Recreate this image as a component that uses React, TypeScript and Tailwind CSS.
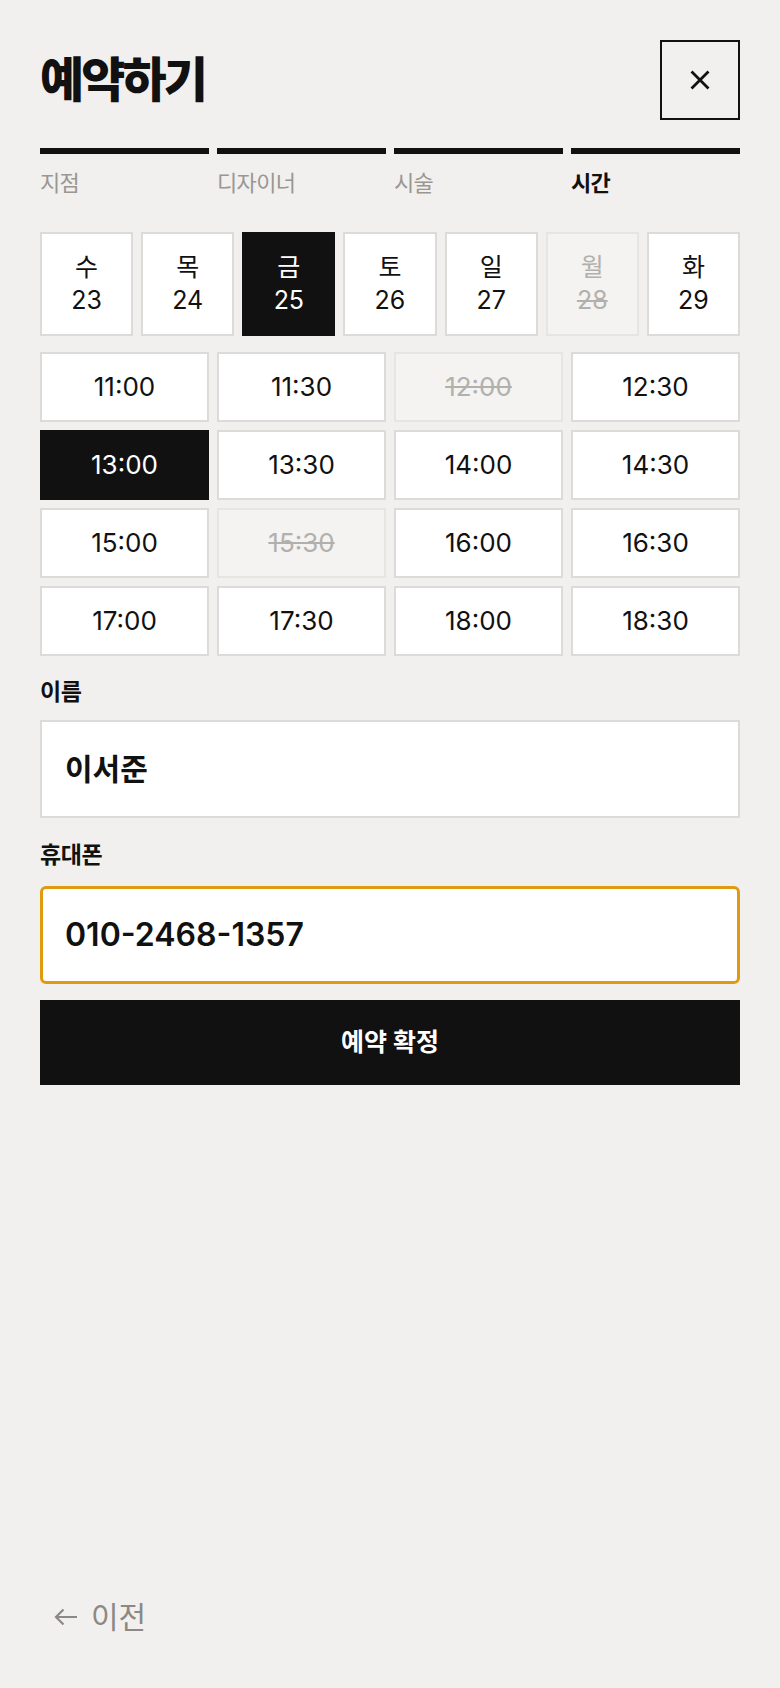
import React from "react";

const dates = [
  { d: "수", n: "23" },
  { d: "목", n: "24" },
  { d: "금", n: "25", sel: true },
  { d: "토", n: "26" },
  { d: "일", n: "27" },
  { d: "월", n: "28", off: true },
  { d: "화", n: "29" },
];

const times = [
  { t: "11:00" },
  { t: "11:30" },
  { t: "12:00", off: true },
  { t: "12:30" },
  { t: "13:00", sel: true },
  { t: "13:30" },
  { t: "14:00" },
  { t: "14:30" },
  { t: "15:00" },
  { t: "15:30", off: true },
  { t: "16:00" },
  { t: "16:30" },
  { t: "17:00" },
  { t: "17:30" },
  { t: "18:00" },
  { t: "18:30" },
];

const steps = [
  { label: "지점" },
  { label: "디자이너" },
  { label: "시술" },
  { label: "시간", active: true },
];

export default function App() {
  return (
    <div className="min-h-screen bg-[#f1f0ee] flex flex-col px-[40px] font-['Inter','Noto_Sans_CJK_KR',sans-serif] text-[#111111]">
      <div className="pt-[40px] flex items-center justify-between">
        <h1 className="text-[48px] font-black leading-none tracking-[-0.06em] text-[#111111]">
          예약하기
        </h1>
        <button className="w-[80px] h-[80px] border-2 border-[#111111] flex items-center justify-center">
          <svg width="20" height="20" viewBox="0 0 20 20" fill="none">
            <path d="M1.5 1.5L18.5 18.5M18.5 1.5L1.5 18.5" stroke="#111111" strokeWidth="2.8" />
          </svg>
        </button>
      </div>

      <div className="mt-[28px] grid grid-cols-4 gap-2">
        {steps.map((s) => (
          <div key={s.label} className="flex flex-col">
            <div className="h-[6px] bg-[#111111]" />
            <span
              className={
                "mt-[15px] text-[22px] leading-[28px] tracking-[-0.03em] " +
                (s.active ? "font-bold text-[#111111]" : "text-[#9a9691]")
              }
            >
              {s.label}
            </span>
          </div>
        ))}
      </div>

      <div className="mt-[35px] grid grid-cols-7 gap-2">
        {dates.map((x) => (
          <div
            key={x.n}
            className={
              "h-[104px] flex flex-col items-center justify-center text-[25px] leading-[33px] border-2 " +
              (x.sel
                ? "bg-[#111111] border-[#111111] text-white"
                : x.off
                ? "bg-[#f4f3f1] border-[#e6e5e2] text-[#b2b0ac]"
                : "bg-white border-[#dcdbd8] text-[#111111]")
            }
          >
            <span>{x.d}</span>
            <span className={x.off ? "line-through" : ""}>{x.n}</span>
          </div>
        ))}
      </div>

      <div className="mt-[16px] grid grid-cols-4 gap-2">
        {times.map((x) => (
          <div
            key={x.t}
            className={
              "h-[70px] flex items-center justify-center text-[26px] leading-none border-2 " +
              (x.sel
                ? "bg-[#111111] border-[#111111] text-white"
                : x.off
                ? "bg-[#f4f3f1] border-[#e6e5e2] text-[#b2b0ac] line-through"
                : "bg-white border-[#dcdbd8] text-[#111111]")
            }
          >
            {x.t}
          </div>
        ))}
      </div>

      <label className="mt-[22px] text-[23px] leading-[28px] font-semibold tracking-[-0.02em] text-[#111111]">이름</label>
      <div className="mt-[14px] h-[98px] bg-white border-2 border-[#dcdbd8] px-[23px] flex items-center text-[30px] font-semibold text-[#111111]">
        이서준
      </div>

      <label className="mt-[23px] text-[23px] leading-[28px] font-semibold tracking-[-0.02em] text-[#111111]">휴대폰</label>
      <div className="mt-[17px] h-[98px] bg-white border-[3px] border-[#e09a10] rounded-[6px] px-[22px] flex items-center text-[32px] font-semibold text-[#111111]">
        010-2468-1357
      </div>

      <button className="mt-[16px] h-[85px] bg-[#111111] text-white text-[25px] font-bold flex items-center justify-center">
        예약 확정
      </button>

      <div className="mt-auto pb-[51px] pl-[14px] flex items-center gap-[13px] text-[30px] leading-[40px] text-[#8c8883]">
        <svg width="24" height="18" viewBox="0 0 24 18" fill="none">
          <path d="M23 9H2M9.5 1.5L2 9L9.5 16.5" stroke="#8c8883" strokeWidth="2.2" />
        </svg>
        <span>이전</span>
      </div>
    </div>
  );
}
